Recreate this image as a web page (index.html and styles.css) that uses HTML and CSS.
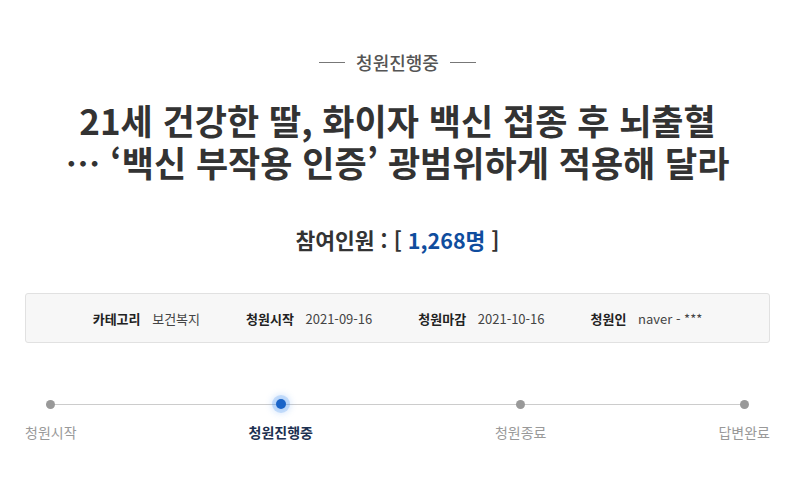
FILE: index.html
```html
<!DOCTYPE html>
<html lang="ko">
<head>
<meta charset="utf-8">
<link rel="stylesheet" href="styles.css">
</head>
<body>
<main class="petition">
  <div class="status-tag"><span class="rule"></span><span class="tag-text">청원진행중</span><span class="rule"></span></div>
  <h1 class="title"><span class="line">21세 건강한 딸, 화이자 백신 접종 후 뇌출혈</span><span class="line">… ‘백신 부작용 인증’ 광범위하게 적용해 달라</span></h1>
  <p class="count">참여인원 : [ <span class="num">1,268명</span> ]</p>
  <ul class="info">
    <li><strong>카테고리</strong> 보건복지</li>
    <li><strong>청원시작</strong> 2021-09-16</li>
    <li><strong>청원마감</strong> 2021-10-16</li>
    <li><strong>청원인</strong> naver - ***</li>
  </ul>
  <div class="progress">
    <div class="track"></div>
    <div class="step"><span class="dot"></span><span class="label">청원시작</span></div>
    <div class="step active"><span class="dot"></span><span class="label">청원진행중</span></div>
    <div class="step"><span class="dot"></span><span class="label">청원종료</span></div>
    <div class="step"><span class="dot"></span><span class="label">답변완료</span></div>
  </div>
</main>
</body>
</html>
```
FILE: styles.css
```css
* { box-sizing: border-box; }
html, body { margin: 0; padding: 0; background: #fff; }
body { font-family: "Noto Sans CJK KR", "Noto Sans", sans-serif; color: #333; }
.petition { padding: 45px 30px 0 25px; }
.status-tag { display: flex; justify-content: center; align-items: center; gap: 11px; height: 34px; }
.rule { width: 26px; height: 1px; background: #777; }
.tag-text { font-size: 18px; line-height: 34px; color: #555; font-weight: 500; }
.title { margin: 20px 0 0; text-align: center; font-size: 35px; font-weight: 700; line-height: 42px; color: #333; letter-spacing: 0; }
.title .line { display: block; height: 42px; }
.count { margin: 42px 0 0; text-align: center; font-size: 21.5px; line-height: 30px; font-weight: 700; color: #333; }
.count .num { color: #0f4d9e; }
.info { list-style: none; margin: 38px 0 0; padding: 0; height: 50px; display: flex; justify-content: center; align-items: center; gap: 46px; background: #f7f7f7; border: 1px solid #e1e1e1; border-radius: 3px; font-size: 13px; color: #444; }
.info strong { font-weight: 700; color: #222; margin-right: 8px; }
.progress { position: relative; display: flex; justify-content: space-between; margin-top: 57px; }
.track { position: absolute; left: 24px; right: 24px; top: 4px; height: 1px; background: #ccc; }
.step { position: relative; display: flex; flex-direction: column; align-items: center; }
.step.active { margin-right: 10px; }
.dot { width: 9px; height: 9px; border-radius: 50%; background: #999; }
.active .dot { width: 10px; height: 10px; background: #1a64c8; box-shadow: 0 0 0 4px rgba(60,140,240,0.22), 0 0 6px 5px rgba(80,150,240,0.22); margin-top: -1px; }
.label { margin-top: 13px; font-size: 14px; line-height: 20px; color: #999; }
.active .label { color: #1c3050; font-weight: 700; margin-top: 13px; }
```
